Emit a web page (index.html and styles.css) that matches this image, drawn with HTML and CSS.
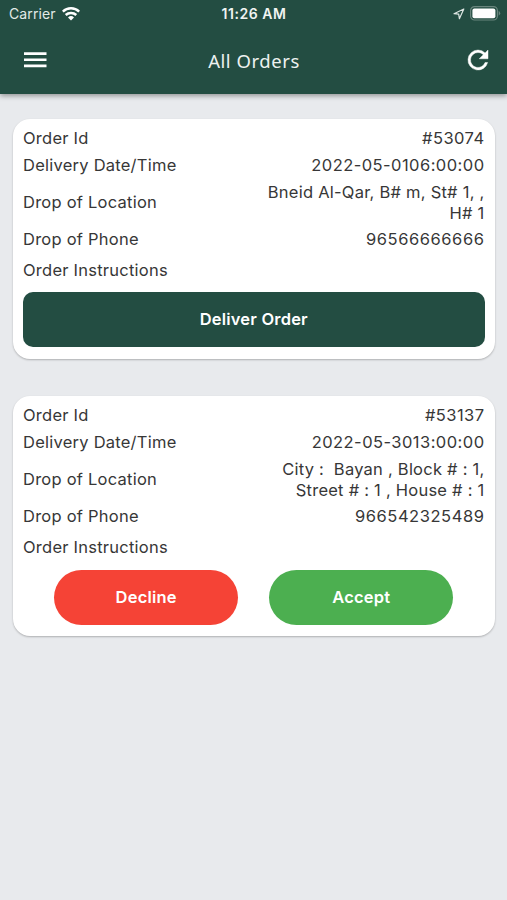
FILE: index.html
```html
<!DOCTYPE html>
<html lang="en">
<head>
<meta charset="utf-8">
<title>All Orders</title>
<link rel="stylesheet" href="styles.css">
</head>
<body>
<header class="header">
  <div class="status">
    <div class="carrier"><span class="carrier-name">Carrier</span>
      <svg class="wifi" width="18" height="14" viewBox="0 0 18 14" fill="none" stroke="#fff" stroke-width="2.5"><path d="M.8 4.6a11.8 11.8 0 0 1 16.4 0"/><path d="M3.7 8a7.7 7.7 0 0 1 10.6 0"/><path d="M9 13.5 6 10.4a4.3 4.3 0 0 1 6 0z" fill="#fff" stroke="none"/></svg>
    </div>
    <span class="clock">11:26 AM</span>
    <div class="indicators">
      <svg width="12" height="12" viewBox="0 0 12 12" fill="none" stroke="#dde6e3" stroke-width="1.2" stroke-linejoin="round"><path d="M10.8 1 1 5.7l4.7.5.7 4.5z"/></svg>
      <svg width="31" height="15" viewBox="0 0 31 15"><rect x=".6" y=".6" width="26.8" height="13.4" rx="4" fill="none" stroke="#69857d" stroke-width="1.2"/><rect x="2.4" y="2.4" width="23" height="9.8" rx="2" fill="#fff"/><path d="M28.7 4.8q3 2.5 0 5z" fill="#69857d"/></svg>
    </div>
  </div>
  <nav class="bar">
    <svg class="menu" width="24" height="18" viewBox="0 0 24 18" fill="#fff"><path d="M0 .3h22.5V3H0zM0 6.4h22.5v2.7H0zM0 12.5h22.5v2.7H0z"/></svg>
    <h1 class="title">All Orders</h1>
    <svg class="refresh" width="30" height="30" viewBox="0 0 24 24" fill="#fff" stroke="#fff" stroke-width=".35"><path d="M17.65 6.35A7.96 7.96 0 0 0 12 4a8 8 0 1 0 7.73 10h-2.08A6 6 0 1 1 12 6c1.66 0 3.14.69 4.22 1.78L13 11h7V4z"/></svg>
  </nav>
</header>
<main class="orders">
  <section class="card">
    <dl class="details">
      <div class="row number"><dt>Order Id</dt><dd>#53074</dd></div>
      <div class="row date"><dt>Delivery Date/Time</dt><dd>2022-05-0106:00:00</dd></div>
      <div class="row"><dt>Drop of Location</dt><dd>Bneid Al-Qar, B# m, St# 1, ,<br>H# 1</dd></div>
      <div class="row phone"><dt>Drop of Phone</dt><dd>96566666666</dd></div>
      <div class="row notes"><dt>Order Instructions</dt><dd></dd></div>
    </dl>
    <button class="button deliver">Deliver Order</button>
  </section>
  <section class="card">
    <dl class="details">
      <div class="row number"><dt>Order Id</dt><dd>#53137</dd></div>
      <div class="row date"><dt>Delivery Date/Time</dt><dd>2022-05-3013:00:00</dd></div>
      <div class="row"><dt>Drop of Location</dt><dd>City :&nbsp; Bayan , Block # : 1,<br>Street # : 1 , House # : 1</dd></div>
      <div class="row phone"><dt>Drop of Phone</dt><dd>966542325489</dd></div>
      <div class="row notes"><dt>Order Instructions</dt><dd></dd></div>
    </dl>
    <div class="actions">
      <button class="button decline">Decline</button>
      <button class="button accept">Accept</button>
    </div>
  </section>
</main>
</body>
</html>
```
FILE: styles.css
```css
* { box-sizing: border-box; }
body {
  margin: 0;
  min-height: 900px;
  background: #e8eaed;
  color: #373737;
  font-family: Inter, sans-serif;
}
.header {
  height: 94px;
  background: #234d42;
  color: #fff;
  box-shadow: 0 2px 5px rgba(0, 0, 0, .36);
}
.status {
  display: grid;
  grid-template-columns: 1fr auto 1fr;
  align-items: center;
  height: 27px;
  padding: 0 6px 0 9px;
}
.carrier { display: flex; align-items: center; gap: 6px; }
.carrier-name { font-size: 14px; letter-spacing: .1px; color: #e2eae7; }
.clock { margin-right: 2px; font-size: 14px; font-weight: 600; letter-spacing: .55px; color: #f0f4f2; }
.indicators { display: flex; align-items: center; justify-content: flex-end; gap: 5px; }
.bar {
  display: grid;
  grid-template-columns: 1fr auto 1fr;
  align-items: center;
  height: 67px;
  padding: 0 14px 0 24px;
}
.title {
  margin: 0 9px 0 0;
  font: 400 18.5px/26px "Noto Sans", sans-serif;
  letter-spacing: .55px;
  color: #edf2f0;
}
.refresh { justify-self: end; margin-bottom: 1px; }
.orders {
  display: flex;
  flex-direction: column;
  gap: 37px;
  padding: 24.5px 12.5px 25px 13px;
}
.card {
  height: 240px;
  padding: 9px 10px 11px;
  border-radius: 17px;
  background: #fff;
  box-shadow: 0 1px 2px rgba(0, 0, 0, .25);
}
.details { margin: 0; }
.row {
  display: flex;
  align-items: center;
  justify-content: space-between;
  margin-bottom: 6px;
  font-size: 16.5px;
  line-height: 21px;
  letter-spacing: .24px;
}
.row dd { margin: 0; text-align: right; white-space: nowrap; }
.number dd { letter-spacing: .45px; }
.date dd { letter-spacing: .45px; }
.phone dd { letter-spacing: .56px; }
.phone { margin-top: -.5px; }
.row.notes { margin: 9.5px 0 11.5px; }
.button {
  display: block;
  height: 55px;
  padding: 0;
  border: 0;
  color: #fff;
  font: 600 16.5px/55px Inter, sans-serif;
  letter-spacing: .2px;
}
.deliver { width: 100%; border-radius: 10px; background: #234d42; }
.actions { display: flex; justify-content: space-evenly; padding-top: .5px; }
.decline, .accept { width: 184px; border-radius: 28px; }
.decline { background: #f54336; }
.accept { background: #4caf50; }
```
